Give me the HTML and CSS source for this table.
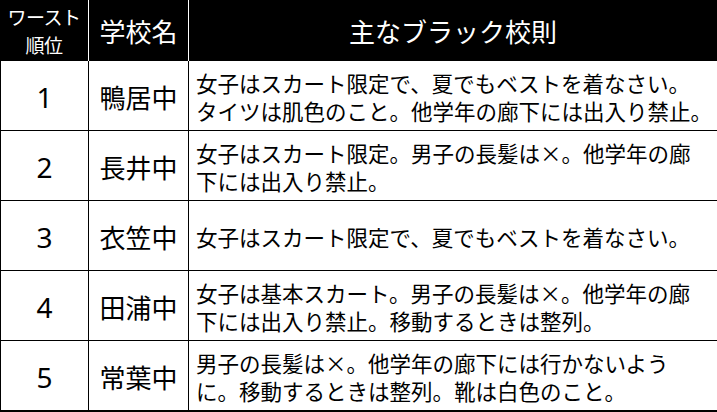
FILE: index.html
```html
<!DOCTYPE html>
<html lang="ja">
<head>
<meta charset="utf-8">
<link rel="stylesheet" href="styles.css">
</head>
<body>
<div class="table">
  <div class="head rank">ワースト<br>順位</div>
  <div class="head name">学校名</div>
  <div class="head rule">主なブラック校則</div>

  <div class="cell num">1</div>
  <div class="cell school">鴨居中</div>
  <div class="cell text">女子はスカート限定で、夏でもベストを着なさい。<br>タイツは肌色のこと。他学年の廊下には出入り禁止。</div>

  <div class="cell num">2</div>
  <div class="cell school">長井中</div>
  <div class="cell text">女子はスカート限定。男子の長髪は×。他学年の廊<br>下には出入り禁止。</div>

  <div class="cell num">3</div>
  <div class="cell school">衣笠中</div>
  <div class="cell text">女子はスカート限定で、夏でもベストを着なさい。</div>

  <div class="cell num">4</div>
  <div class="cell school">田浦中</div>
  <div class="cell text">女子は基本スカート。男子の長髪は×。他学年の廊<br>下には出入り禁止。移動するときは整列。</div>

  <div class="cell num">5</div>
  <div class="cell school">常葉中</div>
  <div class="cell text">男子の長髪は×。他学年の廊下には行かないよう<br>に。移動するときは整列。靴は白色のこと。</div>
</div>
</body>
</html>
```
FILE: styles.css
```css
html, body {
  margin: 0;
  padding: 0;
  background: #fff;
}
body {
  font-family: "Noto Sans CJK JP", "Noto Sans", sans-serif;
  color: #000;
}
.table {
  display: grid;
  grid-template-columns: 88px 100px 529px;
  grid-template-rows: 61px repeat(5, 70px);
  width: 717px;
  height: 412px;
  box-sizing: border-box;
  border-left: 1px solid #000;
  border-bottom: 1px solid #000;
}
.head {
  background: #000;
  color: #fff;
  display: flex;
  align-items: center;
  justify-content: center;
  text-align: center;
  border-right: 1px solid #fff;
  box-sizing: border-box;
  font-weight: 400;
}
.head.rule {
  border-right: 1px solid #000;
}
.rank {
  font-size: 19px;
  line-height: 28px;
  letter-spacing: -0.5px;
  margin-left: -1px;
}
.name, .rule {
  font-size: 26px;
  line-height: 34px;
}
.cell {
  display: flex;
  align-items: center;
  border-right: 1px solid #000;
  border-bottom: 1px solid #000;
  box-sizing: border-box;
}
.cell.num {
  justify-content: center;
  font-family: "Noto Sans", sans-serif;
  font-size: 28px;
  padding-top: 2px;
}
.cell.school {
  justify-content: center;
  font-size: 26px;
  padding-top: 2px;
}
.cell.text {
  font-size: 21.5px;
  line-height: 28px;
  padding-left: 7px;
  padding-top: 3px;
  white-space: nowrap;
}
```
